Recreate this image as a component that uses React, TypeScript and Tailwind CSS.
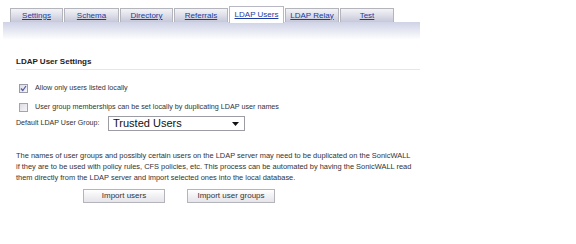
import React from "react";

const tabs = [
  { label: "Settings", w: 54 },
  { label: "Schema", w: 56 },
  { label: "Directory", w: 54 },
  { label: "Referrals", w: 55 },
  { label: "LDAP Users", w: 55, active: true },
  { label: "LDAP Relay", w: 55 },
  { label: "Test", w: 55 },
];

export default function App() {
  return (
    <div
      className="w-[576px] h-[244px] bg-white text-[#222] relative overflow-hidden"
      style={{ fontFamily: '"Liberation Sans", Arial, sans-serif' }}
    >
      <div className="w-[420px]">
        <div className="flex items-end pl-[10px] pt-[6px] h-[22px]">
          {tabs.map((t) =>
            t.active ? (
              <div
                key={t.label}
                className="h-[17px] -mb-[1px] mr-[1px] relative z-10 flex items-center justify-center border border-b-0 border-[#b8b8c4] bg-white text-[8px] text-[#1c3aa0] underline"
                style={{ width: t.w }}
              >
                {t.label}
              </div>
            ) : (
              <div
                key={t.label}
                className="h-[14px] mr-[1px] flex items-center justify-center border border-b-0 border-[#b4b4bc] bg-gradient-to-b from-[#f4f4f6] to-[#c6c8da] text-[8px] text-[#1c3aa0] underline"
                style={{ width: t.w - 1 }}
              >
                {t.label}
              </div>
            )
          )}
        </div>
        <div className="ml-[3px] h-[18px] bg-gradient-to-b from-[#cfd2e6] to-white" />
      </div>

      <div className="pl-[16px] pt-[17px] w-[420px]">
        <div className="text-[8px] font-bold text-[#222] pb-[2px] border-b border-[#e6e6ea] leading-[10px]">
          LDAP User Settings
        </div>

        <div className="mt-[13px] ml-[3px] flex items-center gap-[7px] h-[10px]">
          <div className="w-[9px] h-[9px] border border-[#9a9aa8] bg-gradient-to-br from-[#dcdce4] to-[#f6f6f8] flex items-center justify-center">
            <svg width="7" height="7" viewBox="0 0 7 7">
              <path d="M1 3.5 L2.8 5.5 L6 1" stroke="#4a5aa8" strokeWidth="1.2" fill="none" />
            </svg>
          </div>
          <span className="text-[7.2px] text-[#333]">Allow only users listed locally</span>
        </div>

        <div className="mt-[9px] ml-[3px] flex items-center gap-[7px] h-[10px]">
          <div className="w-[9px] h-[9px] border border-[#a4a4b0] bg-gradient-to-br from-[#dcdce4] to-[#f6f6f8]" />
          <span className="text-[7.2px] text-[#333]">
            User group memberships can be set locally by duplicating LDAP user names
          </span>
        </div>

        <div className="mt-[4px] flex items-center h-[15px]">
          <span className="text-[7.1px] text-[#333] w-[92px]">Default LDAP User Group:</span>
          <div className="w-[137px] h-[15px] border border-[#9c9ca4] bg-white flex items-center justify-between pl-[4px] pr-[5px]">
            <span className="text-[11px] text-[#111]">Trusted Users</span>
            <svg width="7" height="4" viewBox="0 0 7 4">
              <path d="M0 0 H7 L3.5 4 Z" fill="#111" />
            </svg>
          </div>
        </div>

        <div className="mt-[19px] text-[7.45px] leading-[11px] text-[#333] w-[410px]">
          <div>The names of user groups and possibly certain users on the LDAP server may need to be duplicated on the SonicWALL</div>
          <div>if they are to be used with policy rules, CFS policies, etc. This process can be automated by having the SonicWALL read</div>
          <div>them directly from the LDAP server and import selected ones into the local database.</div>
        </div>

        <div className="mt-[6px] flex gap-[22px] pl-[67px]">
          <button className="w-[82px] h-[14px] border border-[#b4b4bc] bg-gradient-to-b from-white to-[#e4e4ea] text-[8px] text-[#333] flex items-center justify-center">
            Import users
          </button>
          <button className="w-[88px] h-[14px] border border-[#b4b4bc] bg-gradient-to-b from-white to-[#e4e4ea] text-[8px] text-[#333] flex items-center justify-center">
            Import user groups
          </button>
        </div>
      </div>
    </div>
  );
}
